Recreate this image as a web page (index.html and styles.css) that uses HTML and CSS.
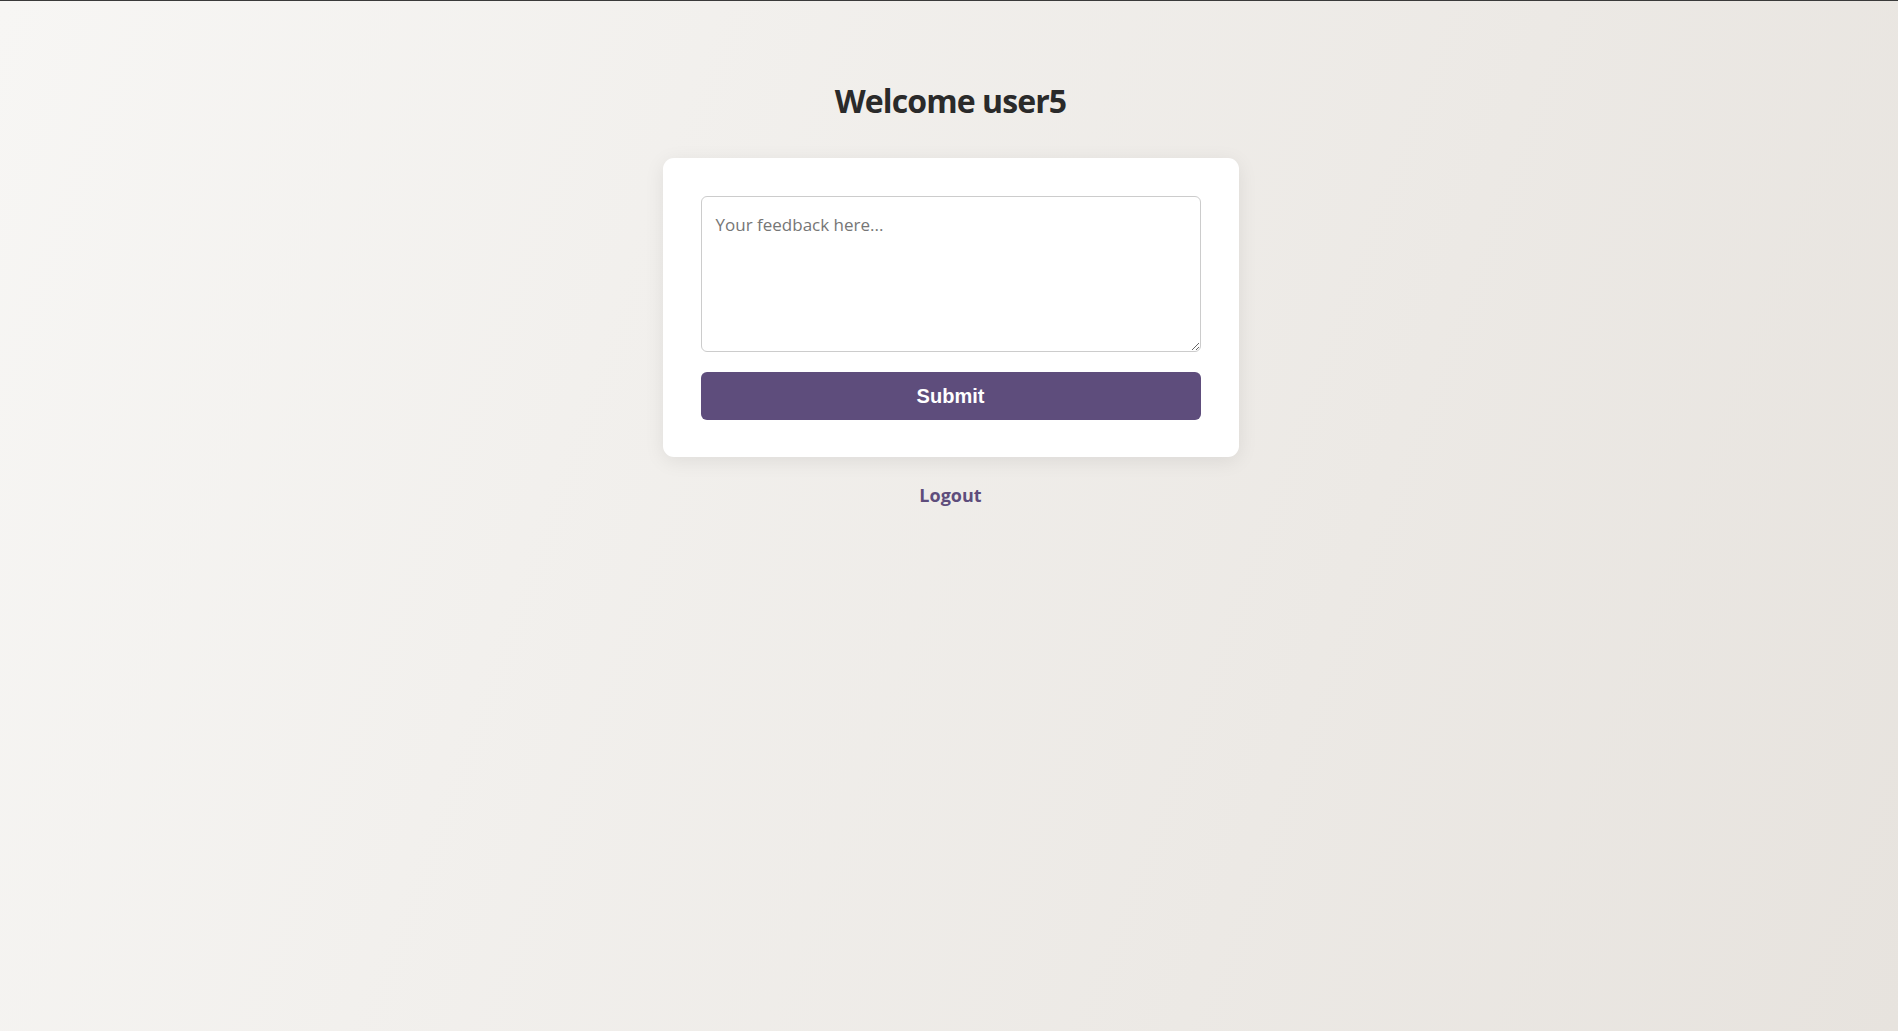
FILE: index.html
```html
<!DOCTYPE html>
<html lang="en">
<head>
<meta charset="utf-8">
<title>Feedback</title>
<link rel="stylesheet" href="styles.css">
</head>
<body>
<main class="page">
  <h1 class="title">Welcome user5</h1>
  <form class="card">
    <textarea class="feedback" placeholder="Your feedback here..."></textarea>
    <button type="button" class="submit">Submit</button>
  </form>
  <a class="logout" href="#">Logout</a>
</main>
</body>
</html>
```

FILE: styles.css
```css
html, body {
  height: 100%;
}
body {
  margin: 0;
  border-top: 1px solid #3a3a3a;
  box-sizing: border-box;
  background: linear-gradient(110deg, #f7f6f4 0%, #e7e3de 100%);
  font-family: "Open Sans", "Noto Sans", sans-serif;
  color: #2a2a2a;
}
.page {
  display: flex;
  flex-direction: column;
  align-items: center;
  padding-top: 78px;
  padding-left: 3px;
}
.title {
  margin: 0;
  font-size: 32px;
  line-height: 44px;
  font-weight: 700;
  letter-spacing: -0.9px;
  color: #2a2a2a;
}
.card {
  margin-top: 35px;
  width: 500px;
  padding: 38px 38px 37px;
  background: #ffffff;
  border-radius: 11px;
  box-shadow: 0 4px 20px rgba(0, 0, 0, 0.08);
  display: flex;
  flex-direction: column;
  gap: 20px;
}
.feedback {
  box-sizing: border-box;
  width: 500px;
  height: 156px;
  margin: 0;
  padding: 15px 14px;
  border: 1px solid #cccccc;
  border-radius: 6px;
  font-family: "Open Sans", "Noto Sans", sans-serif;
  font-size: 17px;
  line-height: 1.5;
  color: #333;
  resize: vertical;
}
.feedback::placeholder {
  color: #767676;
}
.submit {
  height: 48px;
  width: 100%;
  margin: 0;
  border: none;
  border-radius: 6px;
  background: #5e4d7c;
  color: #ffffff;
  font-family: "Liberation Sans", Arial, sans-serif;
  font-weight: 700;
  font-size: 20px;
  cursor: pointer;
}
.logout {
  margin-top: 26px;
  font-size: 18px;
  font-weight: 700;
  color: #5e4d7c;
  text-decoration: none;
}
```
